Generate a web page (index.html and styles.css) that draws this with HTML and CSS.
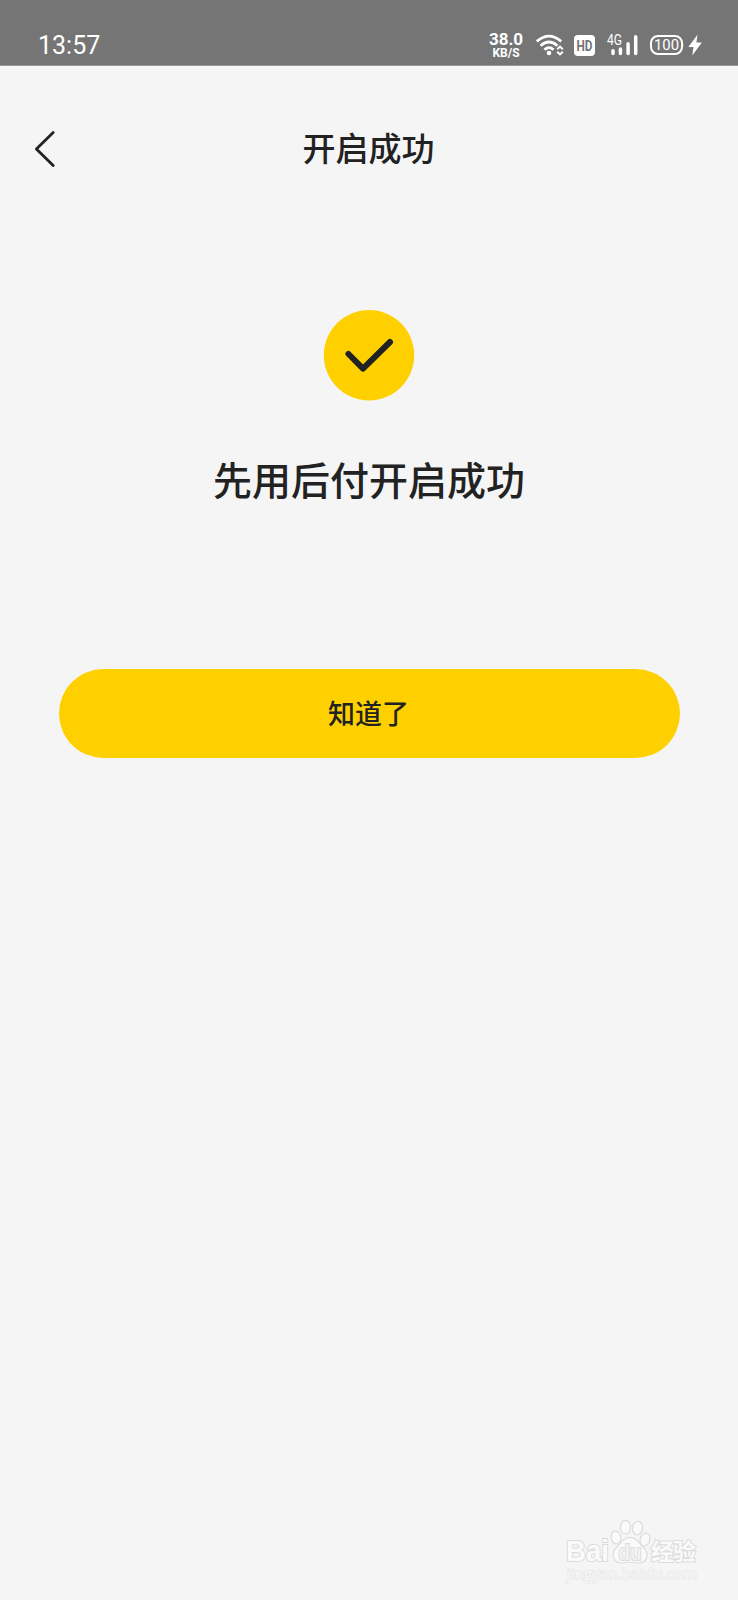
FILE: index.html
```html
<!doctype html>
<html lang="zh-CN">
<head>
	<title>开启成功</title>
	<meta charset="utf-8" />
	<link rel="stylesheet" href="styles.css">
</head>
	<body>
		<div class="status-bar">
			<span class="time">13:57</span>
			<div class="status-icons">
				<div class="speed">
					<span class="speed-value">38.0</span>
					<span class="speed-unit">KB/S</span>
				</div>
				<svg class="wifi" width="28" height="22" viewBox="0 0 28 22">
					<g fill="none" stroke="#fff" stroke-width="2.8">
						<path d="M.8 7.4Q13 -3.2 25.2 7.4"/>
						<path d="M4.6 11.7Q13 4.2 21.4 11.7"/>
						<path d="M8.4 15.7Q13 11.6 17.6 15.7"/>
					</g>
					<circle cx="13" cy="19" r="2.3" fill="#fff"/>
					<path d="M21.2 15.2L24 12.6L26.8 15.2M21.2 17.8L24 20.4L26.8 17.8" fill="none" stroke="#fff" stroke-width="2"/>
				</svg>
				<svg class="hd" width="21" height="21" viewBox="0 0 21 21">
					<rect width="21" height="21" rx="4" fill="#fff"/>
					<text x="2.5" y="16" textLength="16" lengthAdjust="spacingAndGlyphs" fill="#757575">HD</text>
				</svg>
				<svg class="signal" width="32" height="22" viewBox="0 0 32 22">
					<text x="0" y="11" textLength="15" lengthAdjust="spacingAndGlyphs" fill="#fff">4G</text>
					<path d="M6 16.8V19.4M13.4 15V19.4M21.1 9.8V19.4M28.7 2.8V19.4" stroke="#fff" stroke-width="3.5" stroke-linecap="round"/>
				</svg>
				<svg class="battery" width="34" height="22" viewBox="0 0 34 22">
					<rect x="1" y="2" width="31" height="18" rx="7" fill="none" stroke="#fff" stroke-width="2"/>
					<path d="M32 8Q34 11 32 14Z" fill="#fff" stroke="#fff"/>
					<text x="4" y="16.2" textLength="25" lengthAdjust="spacingAndGlyphs" fill="#fff">100</text>
				</svg>
				<svg class="bolt" width="14" height="22" viewBox="0 0 14 22">
					<path d="M9.5 .8L.4 13H5.5L4.3 21.5L13.8 8.4H8.4Z" fill="#fff"/>
				</svg>
			</div>
		</div>
		<div class="nav">
			<a class="back" href="#">
				<svg width="24" height="40" viewBox="0 0 24 40">
					<path d="M19.2 3.5L2.4 20L19.2 36.5" fill="none" stroke="#222" stroke-width="2.8" stroke-linecap="round" stroke-linejoin="round"/>
				</svg>
			</a>
			<h1>开启成功</h1>
		</div>
		<div class="result">
			<svg class="check" width="92" height="91" viewBox="0 0 92 91">
				<circle cx="46" cy="45.3" r="45.2" fill="#ffd000"/>
				<path d="M25.5 44L40 58.6L67 32" fill="none" stroke="#222" stroke-width="6" stroke-linecap="round" stroke-linejoin="round"/>
			</svg>
			<h2>先用后付开启成功</h2>
			<button class="confirm">知道了</button>
		</div>
		<div class="watermark">
			<svg width="140" height="70" viewBox="0 0 140 70">
				<g fill="#fafafa" stroke="#dcdcdc" stroke-width="2">
					<text class="logo" x="1" y="44" textLength="43" lengthAdjust="spacingAndGlyphs">Bai</text>
					<g stroke-width="1.2">
						<ellipse cx="51" cy="20.5" rx="4.8" ry="6.5" transform="rotate(-12 51 20.5)"/>
						<ellipse cx="60.5" cy="10.2" rx="5" ry="6.8"/>
						<ellipse cx="72.5" cy="11" rx="5" ry="6.8" transform="rotate(10 72.5 11)"/>
						<ellipse cx="80" cy="22.5" rx="4.8" ry="6.5" transform="rotate(15 80 22.5)"/>
						<path d="M65 20.5C58 20.5 56 26 52 30C45.5 36 47.5 46 57 46Q65 44.5 73 46C83 46 85 36 78 30C74 26 72 20.5 65 20.5Z"/>
					</g>
					<text class="logo du" x="53.5" y="43" textLength="23" lengthAdjust="spacingAndGlyphs">du</text>
					<text class="jingyan" x="86" y="43" textLength="45">经验</text>
				</g>
				<text class="site" x="2" y="62" textLength="130" lengthAdjust="spacingAndGlyphs">jingyan.baidu.com</text>
			</svg>
		</div>
	</body>
</html>
```
FILE: styles.css
```css
html, body {
	height: 100%;
	margin: 0;
	overflow: hidden;
}
body {
	display: flex;
	flex-direction: column;
	background-color: #f5f5f5;
	color: #222;
	font-family: "Noto Sans CJK SC", sans-serif;
}
svg {
	display: block;
	overflow: visible;
}
h1, h2 {
	margin: 0;
	font-weight: 500;
}

.status-bar {
	display: flex;
	justify-content: space-between;
	box-sizing: border-box;
	height: 66px;
	padding: 24px 36px 0 38px;
	border-bottom: 1px solid #999;
	background-color: #757575;
	color: #fff;
	font-family: Roboto, sans-serif;
}
.time {
	font-size: 25px;
	line-height: 44px;
}
.status-icons {
	display: flex;
	align-items: center;
	height: 42px;
}
.speed {
	display: flex;
	flex-direction: column;
	align-items: center;
	width: 34px;
	margin-right: 13px;
	font-weight: 700;
}
.speed-value {
	font-size: 17px;
	line-height: 15px;
}
.speed-unit {
	font-size: 12px;
	line-height: 12px;
}
.hd {
	margin: 0 12px 0 10px;
	font-size: 15px;
	font-weight: 700;
}
.signal {
	margin-right: 11px;
	font-size: 14px;
}
.battery {
	margin-right: 4px;
	font-size: 15px;
}

.nav {
	display: grid;
	grid-template-columns: 70px 1fr 71px;
	align-items: center;
	height: 96px;
	padding: 35px 0 0 0;
}
.back {
	padding-left: 34px;
}
.nav h1 {
	padding-bottom: 4px;
	font-size: 33px;
	line-height: 48px;
	text-align: center;
}

.result {
	display: flex;
	flex: 1;
	flex-direction: column;
	align-items: center;
	padding-top: 113px;
}
.result h2 {
	margin-top: 48px;
	font-size: 39px;
	line-height: 58px;
}
.confirm {
	width: 621px;
	height: 89px;
	margin-top: 162px;
	padding: 0 1px 2px 0;
	border: 0;
	border-radius: 45px;
	background-color: #ffd000;
	color: #222;
	font-family: inherit;
	font-size: 27px;
	font-weight: 500;
}

.watermark {
	align-self: flex-end;
	margin-right: 33px;
	padding-bottom: 13px;
}
.watermark text {
	paint-order: stroke;
}
.logo {
	font-family: "Liberation Sans", sans-serif;
	font-size: 29px;
	font-weight: 700;
}
.du {
	fill: #f1f1f1;
	font-size: 22px;
}
.jingyan {
	font-size: 23px;
	font-weight: 700;
}
.site {
	fill: #fafafa;
	stroke: #e2e2e2;
	stroke-width: 1.2px;
	font-family: "Open Sans", sans-serif;
	font-size: 15px;
}
```
